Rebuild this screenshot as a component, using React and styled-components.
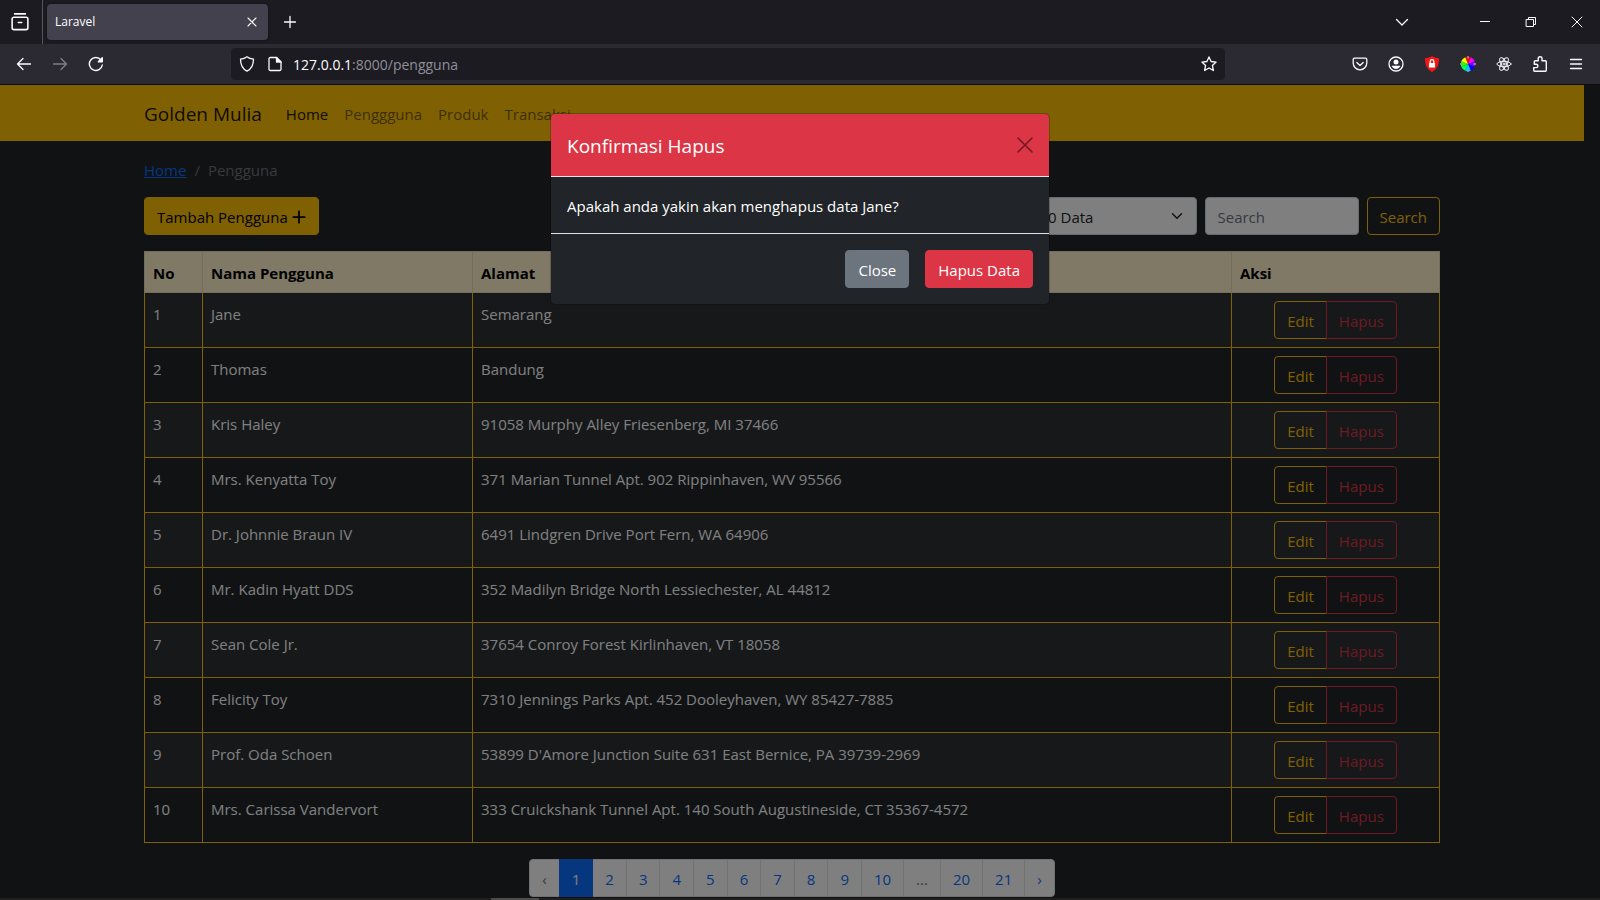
import React from 'react';
import styled, { createGlobalStyle, css } from 'styled-components';

const sans = '"Segoe UI", "Open Sans", "Noto Sans", sans-serif';

const GlobalStyle = createGlobalStyle`
  *, *::before, *::after { box-sizing: border-box; }
  body {
    margin: 0;
    background: #212529;
    color: #fff;
    font-family: ${sans};
    font-size: 15px;
    line-height: 24px;
  }
  button, input, select { font: inherit; }
`;

const Window = styled.div`
  display: flex;
  flex-direction: column;
  min-height: 100vh;
`;

/* Browser chrome */
const TabBar = styled.header`
  display: flex;
  align-items: center;
  height: 44px;
  background: #1c1b22;
`;
const ChromeButton = styled.button`
  display: grid;
  place-items: center;
  flex: none;
  width: ${p => p.$w || 36}px;
  height: ${p => p.$h || 40}px;
  padding: 0;
  border: 0;
  background: none;
  color: #fbfbfe;
  opacity: ${p => (p.disabled ? 0.4 : 1)};
`;
const RecentTabs = styled.div`
  display: flex;
  align-items: center;
  justify-content: center;
  width: 43px;
  height: 44px;
  padding-right: 2px;
  border-right: 1px solid #55545b;
`;
const Tab = styled.div`
  display: flex;
  align-items: center;
  justify-content: space-between;
  width: 221px;
  height: 36px;
  margin: 0 4px;
  padding: 0 4px 0 8px;
  border-radius: 4px;
  background: #42414d;
  box-shadow: 0 0 3px rgba(0, 0, 0, 0.5);
  font-size: 12px;
  line-height: 16px;
`;
const Spacer = styled.div`
  flex: 1;
`;
const WindowButtons = styled.div`
  display: flex;
`;
const ToolBar = styled.div`
  display: flex;
  align-items: center;
  justify-content: space-between;
  height: 41px;
  padding: 0 6px;
  background: #2b2a33;
  border-bottom: 1px solid #0c0c0d;
`;
const ToolGroup = styled.div`
  display: flex;
`;
const AddressBar = styled.div`
  display: flex;
  align-items: center;
  flex: 0 1 994px;
  height: 32px;
  margin-left: 117px;
  margin-right: auto;
  padding: 0 2px;
  border-radius: 4px;
  background: #1c1b22;
`;
const Url = styled.div`
  flex: 1;
  padding: 2px 0 0 4px;
  color: #8f8f98;
  font-size: 14px;
  span { color: #fbfbfe; }
`;

/* Page */
const Viewport = styled.div`
  position: relative;
  flex: 1;
`;
const Page = styled.div`
  isolation: isolate;
  padding-right: 16px;
`;
const Container = styled.div`
  max-width: 1320px;
  margin: 0 auto;
  padding: 0 12px;
`;
const Navbar = styled.nav`
  background: #ffc107;
`;
const NavInner = styled(Container)`
  display: flex;
  align-items: center;
  height: 56px;
  padding-top: 2px;
`;
const Brand = styled.a`
  margin-right: 16px;
  color: rgba(0, 0, 0, 0.9);
  font-size: 19px;
  line-height: 30px;
  text-decoration: none;
`;
const NavLink = styled.a`
  padding: 8px;
  color: ${p => (p.$active ? 'rgba(0,0,0,.9)' : 'rgba(0,0,0,.55)')};
  text-decoration: none;
`;
const Breadcrumb = styled.nav`
  display: flex;
  gap: 8px;
  margin: 17px 0 15px;
  color: #6c757d;
  a { color: #0d6efd; }
`;
const Actions = styled.div`
  display: flex;
  align-items: center;
  justify-content: space-between;
  margin-bottom: 16px;
`;
const SearchForm = styled.form`
  display: flex;
  gap: 8px;
`;

const tones = {
  warning: css`background: #ffc107; border-color: #ffc107; color: #000;`,
  danger: css`background: #dc3545; border-color: #dc3545; color: #fff;`,
  secondary: css`background: #6c757d; border-color: #6c757d; color: #fff;`,
  outlineWarning: css`background: transparent; border-color: #ffc107; color: #ffc107;`,
  outlineDanger: css`background: transparent; border-color: #dc3545; color: #dc3545;`,
};
const Button = styled.button`
  display: inline-flex;
  align-items: center;
  justify-content: center;
  gap: 4px;
  height: 38px;
  padding: 2px 12px 0;
  border: 1px solid;
  border-radius: 4px;
  white-space: nowrap;
  ${p => tones[p.$tone]}
`;
const field = css`
  height: 38px;
  padding: 2px 12px 0;
  border: 1px solid #ced4da;
  border-radius: 4px;
  background: #fff;
  color: #212529;
`;
const SelectWrap = styled.div`
  display: grid;
  align-items: center;
  width: 170px;
  color: #212529;
  > * { grid-area: 1 / 1; }
  svg { justify-self: end; margin-right: 14px; pointer-events: none; }
`;
const Select = styled.select`
  ${field}
  width: 100%;
  appearance: none;
`;
const SearchInput = styled.input`
  ${field}
  width: 154px;
  &::placeholder { color: #6c757d; opacity: 1; }
`;

const Table = styled.table`
  width: 100%;
  margin-bottom: 16px;
  border-collapse: collapse;
  table-layout: fixed;
`;
const Col = styled.col`
  width: ${p => p.$w};
`;
const Th = styled.th`
  padding: 9px 8px 7px;
  border: 1px solid #e6dbb9;
  background: #fff3cd;
  color: #000;
  font-weight: 700;
  text-align: left;
`;
const Row = styled.tr`
  &:nth-child(odd) { background: #2c3034; }
`;
const Td = styled.td`
  padding: ${p => (p.$center ? '8px' : '9px 8px 7px')};
  border: 1px solid #ffc107;
  text-align: ${p => (p.$center ? 'center' : 'left')};
  vertical-align: top;
`;
const ButtonGroup = styled.div`
  display: flex;
  justify-content: center;
  > :first-child { border-radius: 4px 0 0 4px; }
  > :last-child { margin-left: -1px; border-radius: 0 4px 4px 0; }
`;

const Pagination = styled.nav`
  display: flex;
  justify-content: center;
`;
const PageItem = styled.a`
  padding: 7px 12px 5px;
  border: 1px solid #dee2e6;
  background: #fff;
  color: ${p => (p.$muted ? '#6c757d' : '#0d6efd')};
  text-decoration: none;
  & + & { margin-left: -1px; }
  &:first-child { border-radius: 4px 0 0 4px; }
  &:last-child { border-radius: 0 4px 4px 0; }
  ${p => p.$active && css`
    z-index: 1;
    border-color: #0d6efd;
    background: #0d6efd;
    color: #fff;
  `}
`;

/* Modal */
const Backdrop = styled.div`
  position: absolute;
  inset: 0;
  padding-top: 28px;
  background: rgba(0, 0, 0, 0.5);
`;
const Dialog = styled.section`
  max-width: 500px;
  margin: 0 auto;
  border: 1px solid rgba(0, 0, 0, 0.2);
  border-radius: 5px;
  background: #212529;
  background-clip: padding-box;
`;
const DialogHeader = styled.div`
  display: flex;
  align-items: center;
  justify-content: space-between;
  padding: 17px 16px 15px;
  border-bottom: 1px solid #dee2e6;
  border-radius: 4px 4px 0 0;
  background: #dc3545;
`;
const DialogTitle = styled.h5`
  margin: 0;
  font-size: 19px;
  font-weight: 400;
  line-height: 30px;
`;
const CloseButton = styled.button`
  display: flex;
  padding: 0 0 2px;
  border: 0;
  background: none;
  color: #000;
  opacity: 0.5;
`;
const DialogBody = styled.div`
  padding: 17px 16px 15px;
`;
const DialogFooter = styled.div`
  display: flex;
  justify-content: flex-end;
  gap: 16px;
  padding: 16px;
  border-top: 1px solid #dee2e6;
`;

const DesktopEdge = styled.footer`
  display: flex;
  height: 2px;
  padding-left: 491px;
  background: #1f1f20;
`;
const TaskMark = styled.span`
  width: 48px;
  background: #4c4c4d;
`;

const Icon = ({ size = 16, width = 1.3, children, ...rest }) => (
  <svg width={size} height={size} viewBox="0 0 16 16" fill="none" stroke="currentColor"
    strokeWidth={width} strokeLinecap="round" strokeLinejoin="round" aria-hidden="true" {...rest}>
    {children}
  </svg>
);

const petals = ['#f00', '#f0f', '#80f', '#00f', '#0cf', '#0f6', '#3f0', '#ff0'];

const users = [
  ['Jane', 'Semarang'],
  ['Thomas', 'Bandung'],
  ['Kris Haley', '91058 Murphy Alley Friesenberg, MI 37466'],
  ['Mrs. Kenyatta Toy', '371 Marian Tunnel Apt. 902 Rippinhaven, WV 95566'],
  ['Dr. Johnnie Braun IV', '6491 Lindgren Drive Port Fern, WA 64906'],
  ['Mr. Kadin Hyatt DDS', '352 Madilyn Bridge North Lessiechester, AL 44812'],
  ['Sean Cole Jr.', '37654 Conroy Forest Kirlinhaven, VT 18058'],
  ['Felicity Toy', '7310 Jennings Parks Apt. 452 Dooleyhaven, WY 85427-7885'],
  ['Prof. Oda Schoen', "53899 D'Amore Junction Suite 631 East Bernice, PA 39739-2969"],
  ['Mrs. Carissa Vandervort', '333 Cruickshank Tunnel Apt. 140 South Augustineside, CT 35367-4572'],
];
const pages = ['‹', '1', '2', '3', '4', '5', '6', '7', '8', '9', '10', '...', '20', '21', '›'];

function BrowserChrome() {
  return (
    <>
      <TabBar>
        <RecentTabs>
          <ChromeButton aria-label="Recent tabs">
            <Icon size={18} width={1.4}><path d="M3.2 .8h9.6M2.6 3.8h10.8a1.6 1.6 0 0 1 1.6 1.6v7.8a1.6 1.6 0 0 1-1.6 1.6H2.6A1.6 1.6 0 0 1 1 13.2V5.4a1.6 1.6 0 0 1 1.6-1.6zM6.5 8.5h3" /></Icon>
          </ChromeButton>
        </RecentTabs>
        <Tab>
          <span>Laravel</span>
          <ChromeButton $w={24} $h={24} aria-label="Close tab">
            <Icon width={1.1}><path d="M4 4l8 8M12 4l-8 8" /></Icon>
          </ChromeButton>
        </Tab>
        <ChromeButton aria-label="New tab">
          <Icon><path d="M8 2.5v11M2.500 8h11" /></Icon>
        </ChromeButton>
        <Spacer />
        <ChromeButton $w={120} aria-label="List tabs">
          <Icon><path d="M2.5 5.5L8 11l5.5-5.5" /></Icon>
        </ChromeButton>
        <WindowButtons>
          <ChromeButton $w={46} aria-label="Minimize">
            <Icon width={1}><path d="M3 7.5h10" strokeLinecap="butt" /></Icon>
          </ChromeButton>
          <ChromeButton $w={46} aria-label="Restore">
            <Icon width={1}><path d="M3.5 5.5h7v7h-7zM5.5 5.5v-2h7v7h-2" /></Icon>
          </ChromeButton>
          <ChromeButton $w={46} aria-label="Close">
            <Icon width={1}><path d="M3 3l10 10M13 3L3 13" /></Icon>
          </ChromeButton>
        </WindowButtons>
      </TabBar>
      <ToolBar>
        <ToolGroup>
          <ChromeButton aria-label="Back"><Icon><path d="M14.5 8H1.5M7 2.5L1.5 8 7 13.5" /></Icon></ChromeButton>
          <ChromeButton disabled aria-label="Forward"><Icon><path d="M1.5 8h13M9 2.5L14.5 8 9 13.5" /></Icon></ChromeButton>
          <ChromeButton aria-label="Reload"><Icon width={1.4}><path d="M14.3 9A6.5 6.5 0 1 1 13 4" /><path d="M14.3 1.8v4h-4z" fill="currentColor" /></Icon></ChromeButton>
        </ToolGroup>
        <AddressBar>
          <ChromeButton $w={28} $h={32} aria-label="Tracking protection"><Icon><path d="M8 .8C6.5 2 4 2.9 1.5 3.1c0 5.400 1.600 9.800 6.500 12.100 4.900-2.300 6.500-6.700 6.500-12.100C12 2.9 9.5 2 8 .8z" /></Icon></ChromeButton>
          <ChromeButton $w={28} $h={32} aria-label="Site information"><Icon><path d="M9.5 1.500H3.300A1.300 1.300 0 0 0 2 2.800v10.400a1.300 1.300 0 0 0 1.300 1.300h9.400a1.300 1.300 0 0 0 1.300-1.300V6z" /><path d="M9.5 1.5V6H14z" fill="currentColor" /></Icon></ChromeButton>
          <Url><span>127.0.0.1</span>:8000/pengguna</Url>
          <ChromeButton $w={28} $h={32} aria-label="Bookmark"><Icon><path d="M8 .9l2.1 4.600 5 .6-3.700 3.400 1 5L8 12l-4.400 2.500 1-5L.9 6.100l5-.6z" /></Icon></ChromeButton>
        </AddressBar>
        <ToolGroup>
          <ChromeButton aria-label="Pocket"><Icon><path d="M2.5 2.2h11a1.3 1.3 0 0 1 1.3 1.3V7a6.8 6.8 0 0 1-13.6 0V3.5a1.3 1.3 0 0 1 1.3-1.3zM4.8 6.5L8 9.5l3.2-3" /></Icon></ChromeButton>
          <ChromeButton aria-label="Account"><Icon><circle cx="8" cy="8" r="7" /><circle cx="8" cy="6" r="2.500" fill="currentColor" stroke="none" /><path d="M3.600 9.800h8.800c-.6 2-2.300 3.200-4.400 3.200s-3.800-1.200-4.400-3.200z" fill="currentColor" stroke="none" /></Icon></ChromeButton>
          <ChromeButton aria-label="Ad blocker"><Icon stroke="none"><path d="M8 0c2 1.5 4.5 2 7 2 0 6-1.3 11-7 14C2.3 13 1 8 1 2c2.5 0 5-.5 7-2z" fill="#f21616" /><path d="M5 7h6v4.5H5z" fill="#fff" /><path d="M6.2 7V5.5a1.8 1.8 0 0 1 3.6 0V7" stroke="#fff" fill="none" /></Icon></ChromeButton>
          <ChromeButton aria-label="Color picker"><Icon stroke="none">
            {petals.map((c, i) => <path key={c} d="M8 8L5.2 1.2Q8 .2 10.8 1.2z" fill={c} transform={`rotate(${i * 45} 8 8)`} />)}
            <path d="M8 0v2M8 14v2M0 8h2M14 8h2" stroke="#9a9aa0" strokeWidth="1.5" />
          </Icon></ChromeButton>
          <ChromeButton aria-label="React tools"><Icon width={1}><circle cx="8" cy="8" r="1" />{[0, 60, 120].map(a => <ellipse key={a} cx="8" cy="8" rx="7" ry="2.7" transform={`rotate(${a} 8 8)`} />)}</Icon></ChromeButton>
          <ChromeButton aria-label="Extensions"><Icon width={1.4}><path d="M2.700 15.200h10.600a1 1 0 0 0 1-1V5.700a1 1 0 0 0-1-1H10V2.600a1.900 1.900 0 0 0-3.800 0v2.100H3.300a1 1 0 0 0-1 1v2.500h1.900a1.700 1.700 0 0 1 0 3.400H1.700v2.600a1 1 0 0 0 1 1z" /></Icon></ChromeButton>
          <ChromeButton aria-label="Menu"><Icon><path d="M2.5 3.5h11M2.5 8h11M2.5 12.5h11" /></Icon></ChromeButton>
        </ToolGroup>
      </ToolBar>
    </>
  );
}

export default function App() {
  return (
    <Window>
      <GlobalStyle />
      <BrowserChrome />
      <Viewport>
        <Page>
          <Navbar>
            <NavInner>
              <Brand href="#">Golden Mulia</Brand>
              <NavLink href="#" $active>Home</NavLink>
              <NavLink href="#">Penggguna</NavLink>
              <NavLink href="#">Produk</NavLink>
              <NavLink href="#">Transaksi</NavLink>
            </NavInner>
          </Navbar>
          <Container>
            <Breadcrumb aria-label="breadcrumb">
              <a href="#">Home</a><span>/</span><span>Pengguna</span>
            </Breadcrumb>
            <Actions>
              <Button $tone="warning">
                Tambah Pengguna
                <Icon size={14} width={2}><path d="M8 1.5v13M1.500 8h13" /></Icon>
              </Button>
              <SearchForm>
                <SelectWrap>
                  <Select aria-label="Rows per page" defaultValue="10">
                    <option value="10">10 Data</option>
                  </Select>
                  <Icon size={12} width={2}><path d="M2 5l6 6 6-6" /></Icon>
                </SelectWrap>
                <SearchInput type="search" placeholder="Search" aria-label="Search" />
                <Button type="button" $tone="outlineWarning">Search</Button>
              </SearchForm>
            </Actions>
            <Table>
              <colgroup><Col $w="58px" /><Col $w="270px" /><Col /><Col $w="208px" /></colgroup>
              <thead>
                <tr><Th>No</Th><Th>Nama Pengguna</Th><Th>Alamat</Th><Th>Aksi</Th></tr>
              </thead>
              <tbody>
                {users.map(([name, address], i) => (
                  <Row key={name}>
                    <Td>{i + 1}</Td>
                    <Td>{name}</Td>
                    <Td>{address}</Td>
                    <Td $center>
                      <ButtonGroup>
                        <Button $tone="outlineWarning">Edit</Button>
                        <Button $tone="outlineDanger">Hapus</Button>
                      </ButtonGroup>
                    </Td>
                  </Row>
                ))}
              </tbody>
            </Table>
            <Pagination aria-label="Pages">
              {pages.map(p => (
                <PageItem key={p} href="#" $active={p === '1'} $muted={p === '‹' || p === '...'}>{p}</PageItem>
              ))}
            </Pagination>
          </Container>
        </Page>
        <Backdrop>
          <Dialog role="dialog" aria-modal="true" aria-labelledby="confirm-title">
            <DialogHeader>
              <DialogTitle id="confirm-title">Konfirmasi Hapus</DialogTitle>
              <CloseButton aria-label="Close">
                <Icon width={1.5}><path d="M1 1l14 14M15 1L1 15" /></Icon>
              </CloseButton>
            </DialogHeader>
            <DialogBody>Apakah anda yakin akan menghapus data Jane?</DialogBody>
            <DialogFooter>
              <Button $tone="secondary">Close</Button>
              <Button $tone="danger">Hapus Data</Button>
            </DialogFooter>
          </Dialog>
        </Backdrop>
      </Viewport>
      <DesktopEdge><TaskMark /></DesktopEdge>
    </Window>
  );
}
